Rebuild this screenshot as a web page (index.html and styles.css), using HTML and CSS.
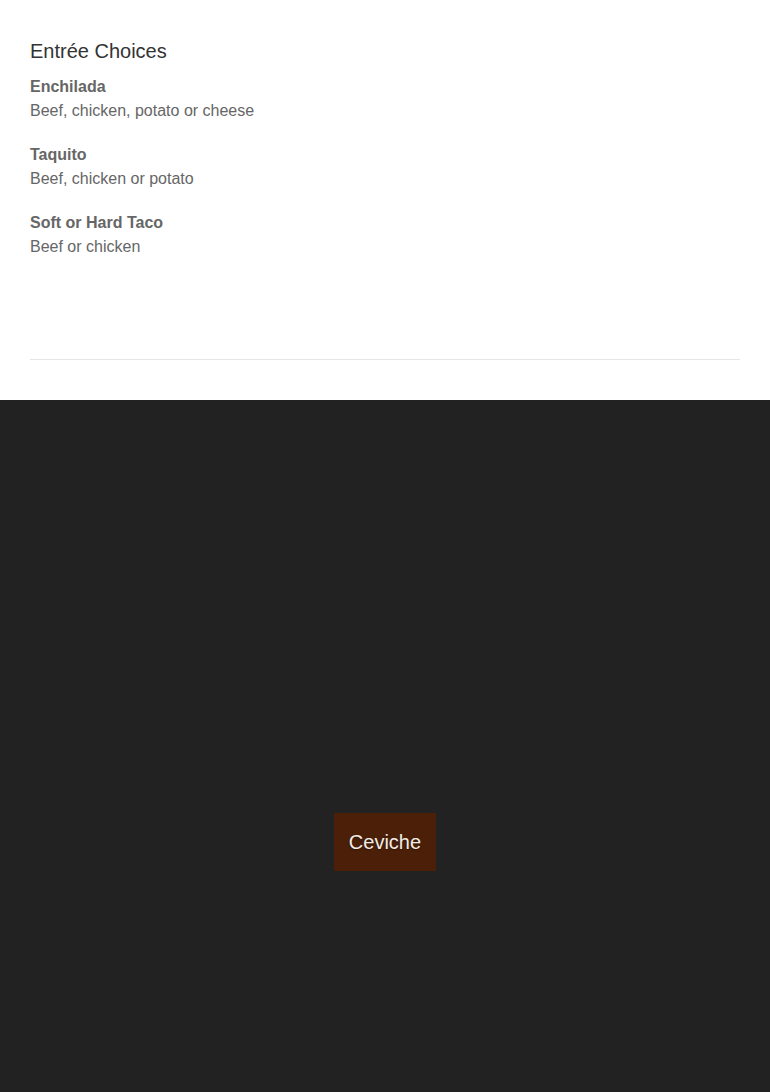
FILE: index.html
```html
<!DOCTYPE html>
<html lang="en">
<head>
    <meta charset="UTF-8">
    <meta name="viewport" content="width=device-width, initial-scale=1.0">
    <title>Menu - Entrée Choices</title>
    <link rel="stylesheet" href="styles.css">
</head>
<body>
    <section class="menu-section">
        <h2 class="menu-title">Entrée Choices</h2>

        <div class="menu-item">
            <div class="item-name">Enchilada</div>
            <div class="item-desc">Beef, chicken, potato or cheese</div>
        </div>
        <div class="menu-item">
            <div class="item-name">Taquito</div>
            <div class="item-desc">Beef, chicken or potato</div>
        </div>
        <div class="menu-item">
            <div class="item-name">Soft or Hard Taco</div>
            <div class="item-desc">Beef or chicken</div>
        </div>

        <hr class="divider">
    </section>

    <!-- Dark feature block -->
    <section class="feature">
        <a class="feature-btn" href="#">Ceviche</a>
    </section>
</body>
</html>
```

FILE: styles.css
```css
body {
    margin: 0;
    font-family: "Liberation Sans", Arial, sans-serif;
    background: #fff;
    color: #666;
}
.menu-section {
    padding: 39px 30px 0;
}
.menu-title {
    margin: 0 0 12px;
    font-size: 20px;
    font-weight: normal;
    line-height: 24px;
    color: #333;
}
.menu-item {
    margin-bottom: 20px;
    font-size: 16px;
    line-height: 24px;
}
.item-name {
    font-weight: bold;
}
.divider {
    border: none;
    border-top: 1px solid #e6e6e6;
    margin: 100px 0 0;
    height: 0;
}
.feature {
    margin-top: 40px;
    background: #222;
    height: 692px;
    padding-top: 413px;
    box-sizing: border-box;
    display: flex;
    justify-content: center;
    align-items: flex-start;
}
.feature-btn {
    display: block;
    background: #4b1f08;
    color: #f2ece6;
    text-decoration: none;
    font-size: 20px;
    line-height: 28px;
    padding: 15px 15px;
    text-shadow: 0 1px 2px rgba(0, 0, 0, 0.4);
}
```
